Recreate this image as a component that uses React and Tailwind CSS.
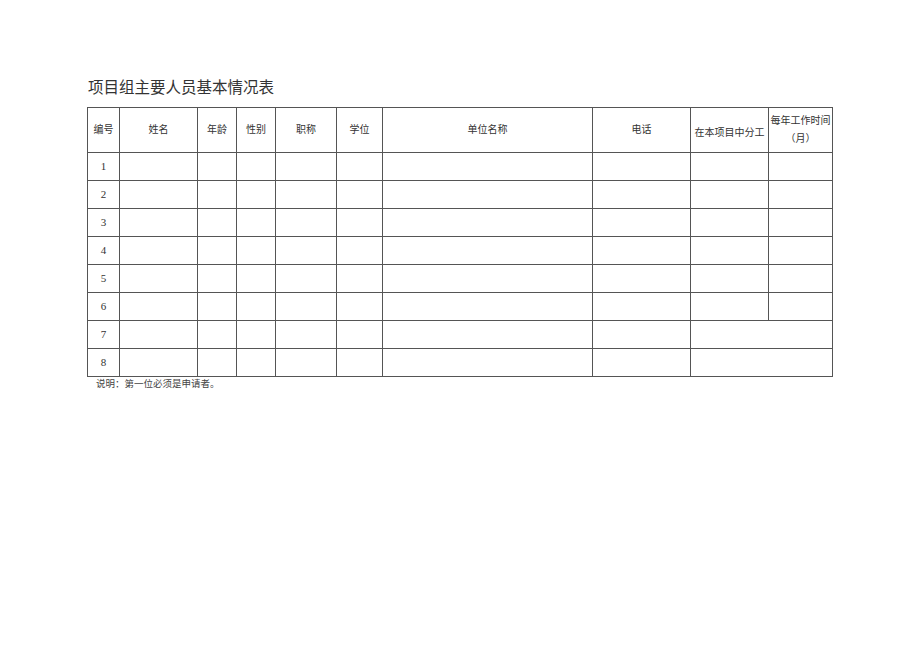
const cols = [32, 78, 39, 39, 61, 46, 210, 98, 78, 64];
const heads = ["编号", "姓名", "年龄", "性别", "职称", "学位", "单位名称", "电话", "在本项目中分工"];

export default function App() {
  const cell = "border border-[#555] p-0";
  return (
    <div className="w-[920px] h-[651px] bg-white pl-[87px] pt-[78px] text-[#333]" style={{ fontFamily: '"Liberation Serif", "Noto Sans CJK SC", serif' }}>
      <div className="h-[20px] text-[15.5px] leading-[20px] pl-[1px]">项目组主要人员基本情况表</div>
      <div className="h-[9px]" />
      <table className="border-collapse table-fixed w-[746px]">
        <colgroup>
          {cols.map((w, i) => (
            <col key={i} style={{ width: w }} />
          ))}
        </colgroup>
        <thead>
          <tr className="h-[45px]">
            {heads.map((h) => (
              <th key={h} className={`${cell} font-normal text-[10px] leading-[14px] align-middle text-center ${h === "在本项目中分工" ? "pt-[5px]" : ""}`}>
                {h}
              </th>
            ))}
            <th className={`${cell} font-normal text-[10px] leading-[18px] text-center`}>
              <div>每年工作时间</div>
              <div>（月）</div>
            </th>
          </tr>
        </thead>
        <tbody>
          {[1, 2, 3, 4, 5, 6, 7, 8].map((n) => (
            <tr key={n} className="h-[28px]">
              <td className={`${cell} text-center text-[11px] leading-none`}>{n}</td>
              {[0, 1, 2, 3, 4, 5, 6].map((i) => (
                <td key={i} className={cell} />
              ))}
              {n <= 6 ? (
                <>
                  <td className={cell} />
                  <td className={cell} />
                </>
              ) : (
                <td colSpan={2} className={cell} />
              )}
            </tr>
          ))}
        </tbody>
      </table>
      <div className="pl-[9px] pt-[1px] text-[9.5px] leading-[12px] text-[#444]">说明：第一位必须是申请者。</div>
    </div>
  );
}
